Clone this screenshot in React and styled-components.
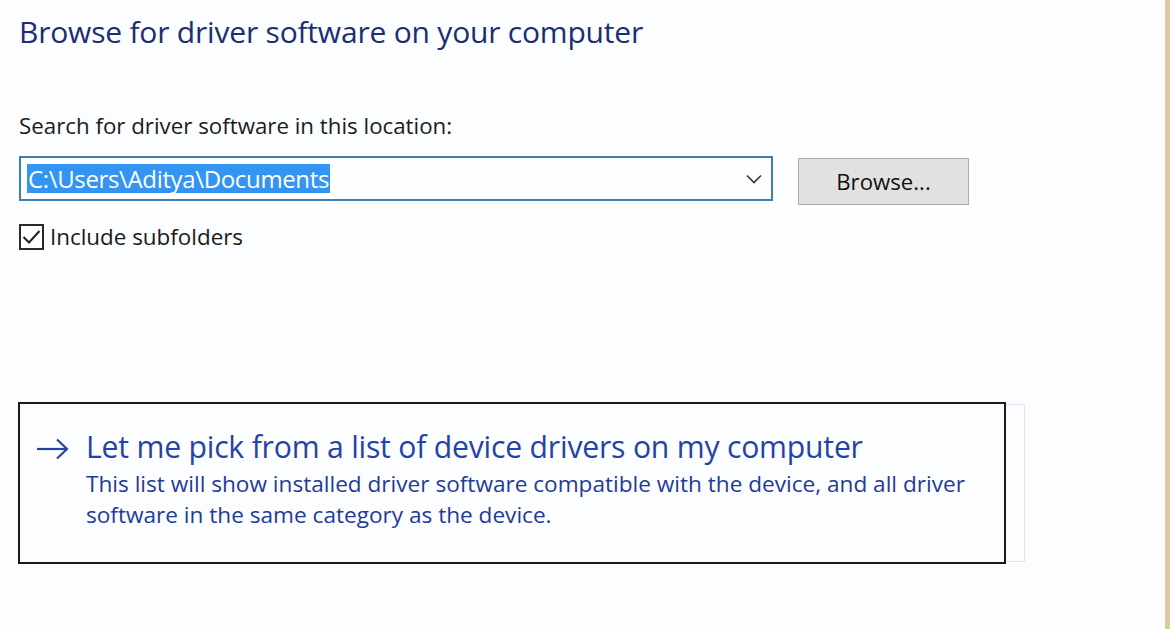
import React from "react";
import styled, { createGlobalStyle } from "styled-components";

const Global = createGlobalStyle`
  html, body { margin: 0; padding: 0; background: #fbfdfe; }
  body { font-family: "Open Sans", "Noto Sans", sans-serif; }
`;

const Page = styled.div`
  box-sizing: border-box;
  width: 1170px;
  height: 629px;
  overflow: hidden;
  background: #fbfdfe;
  border-right: 5px solid #e2c99c;
  padding: 12px 0 0 19px;
  display: flex;
  flex-direction: column;
`;

const Title = styled.h1`
  margin: 0;
  font-weight: 400;
  font-size: 30px;
  line-height: 40px;
  color: #1d2d74;
  letter-spacing: -0.2px;
  white-space: nowrap;
`;

const Label = styled.div`
  margin-top: 60px;
  font-size: 22.3px;
  line-height: 28px;
  color: #1b1b1b;
  white-space: nowrap;
`;

const PathRow = styled.div`
  margin-top: 16px;
  display: flex;
  align-items: flex-start;
  gap: 25px;
`;

const Combo = styled.div`
  box-sizing: border-box;
  width: 754px;
  height: 45px;
  border: 2px solid #3f7fb0;
  background: #fdfeff;
  display: flex;
  align-items: center;
  padding: 0 9px 0 6px;
`;

const Selected = styled.span`
  background: #3394f2;
  color: #ffffff;
  font-size: 24px;
  line-height: 29px;
  padding: 0 1px;
  letter-spacing: -0.35px;
  white-space: nowrap;
`;

const Chevron = styled.svg`
  margin-left: auto;
  width: 16px;
  height: 10px;
`;

const Button = styled.button`
  box-sizing: border-box;
  margin-top: 2px;
  width: 171px;
  height: 47px;
  background: #e1e1e1;
  border: 1px solid #adadad;
  font-family: inherit;
  font-size: 22.2px;
  color: #111;
  padding: 0;
`;

const CheckRow = styled.label`
  margin-top: 18px;
  display: flex;
  align-items: center;
  gap: 6px;
  font-size: 22.4px;
  color: #1b1b1b;
  line-height: 28px;
`;

const Box = styled.span`
  box-sizing: border-box;
  width: 25px;
  height: 26px;
  border: 2px solid #2a2a2a;
  display: flex;
  align-items: center;
  justify-content: center;
  background: #fff;
`;

const OptionWrap = styled.div`
  margin-top: 151px;
  margin-left: -1px;
  position: relative;
  width: 1007px;
`;

const Ghost = styled.div`
  position: absolute;
  left: 0;
  top: 2px;
  width: 1006px;
  height: 156px;
  border: 1px solid #e3e6ea;
  border-left: none;
`;

const Option = styled.div`
  position: relative;
  box-sizing: border-box;
  width: 988px;
  height: 162px;
  border: 2px solid #1a1a1a;
  background: #fcfdff;
  display: flex;
  align-items: flex-start;
  padding: 24px 0 0 16px;
  gap: 16px;
`;

const Arrow = styled.svg`
  width: 34px;
  height: 22px;
  margin-top: 10px;
  flex-shrink: 0;
`;

const OptionText = styled.div`
  display: flex;
  flex-direction: column;
`;

const OptionTitle = styled.div`
  font-size: 30.15px;
  line-height: 38px;
  color: #2443a6;
  letter-spacing: -0.2px;
  white-space: nowrap;
`;

const OptionDesc = styled.div`
  margin-top: 2px;
  font-size: 22.6px;
  line-height: 31px;
  color: #1f3b98;
  width: 890px;
`;

export default function App() {
  return (
    <>
      <Global />
      <Page>
        <Title>Browse for driver software on your computer</Title>
        <Label>Search for driver software in this location:</Label>
        <PathRow>
          <Combo>
            <Selected>C:\Users\Aditya\Documents</Selected>
            <Chevron viewBox="0 0 16 10">
              <polyline points="1,1.5 8,8.5 15,1.5" fill="none" stroke="#333" strokeWidth="1.6" />
            </Chevron>
          </Combo>
          <Button>Browse...</Button>
        </PathRow>
        <CheckRow>
          <Box>
            <svg width="19" height="16" viewBox="0 0 19 16">
              <polyline points="1.5,8 7,13.5 17.5,2" fill="none" stroke="#222" strokeWidth="2" />
            </svg>
          </Box>
          Include subfolders
        </CheckRow>
        <OptionWrap>
          <Ghost />
          <Option>
            <Arrow viewBox="0 0 34 22">
              <line x1="1" y1="11" x2="31" y2="11" stroke="#2443a6" strokeWidth="2.2" />
              <polyline points="21,1.5 31,11 21,20.5" fill="none" stroke="#2443a6" strokeWidth="2.2" />
            </Arrow>
            <OptionText>
              <OptionTitle>Let me pick from a list of device drivers on my computer</OptionTitle>
              <OptionDesc>
                This list will show installed driver software compatible with the device, and all driver software in the same category as the device.
              </OptionDesc>
            </OptionText>
          </Option>
        </OptionWrap>
      </Page>
    </>
  );
}
